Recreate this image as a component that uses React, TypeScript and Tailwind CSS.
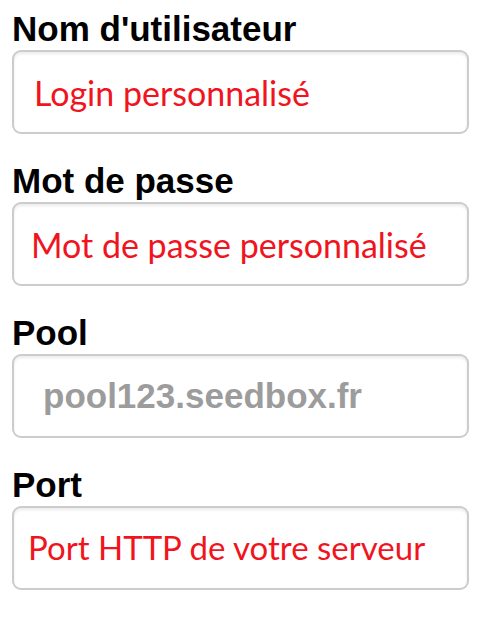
const labelFont = { fontFamily: '"Liberation Sans", Arial, sans-serif' }
const hintFont = { fontFamily: 'Lato, "Open Sans", sans-serif' }

type Field = {
  label: string
  value: string
  kind: 'red' | 'gray'
  cls: string
}

// each hint sits a little differently in the reference, so padding/size per field
const fields: Field[] = [
  { label: "Nom d'utilisateur", value: 'Login personnalisé', kind: 'red', cls: 'pl-[20px] text-[34px]' },
  { label: 'Mot de passe', value: 'Mot de passe personnalisé', kind: 'red', cls: 'pl-[17px] text-[34px]' },
  { label: 'Pool', value: 'pool123.seedbox.fr', kind: 'gray', cls: 'pl-[29px] text-[35px]' },
  { label: 'Port', value: 'Port HTTP de votre serveur', kind: 'red', cls: 'pl-[14px] text-[33px]' },
]

export default function App() {
  return (
    <div className="min-h-[635px] w-[489px] bg-white pt-[11px] pl-[12px] pr-[20px]">
      <div className="flex flex-col gap-[29px]">
        {fields.map((f) => (
          <div key={f.label} className="flex flex-col">
            <label
              className="h-[35px] text-[35px] leading-[35px] font-bold text-black whitespace-nowrap"
              style={labelFont}
            >
              {f.label}
            </label>
            <div
              className={
                'mt-[4px] h-[84px] flex items-center rounded-[9px] border-2 border-[#cccccc] bg-white shadow-[inset_0_2px_3px_rgba(0,0,0,0.08)] ' +
                f.cls
              }
            >
              {f.kind === 'red' ? (
                <span className="text-[#f0141e] whitespace-nowrap" style={hintFont}>
                  {f.value}
                </span>
              ) : (
                <span className="font-bold text-[#9c9c9c] whitespace-nowrap" style={labelFont}>
                  {f.value}
                </span>
              )}
            </div>
          </div>
        ))}
      </div>
    </div>
  )
}
